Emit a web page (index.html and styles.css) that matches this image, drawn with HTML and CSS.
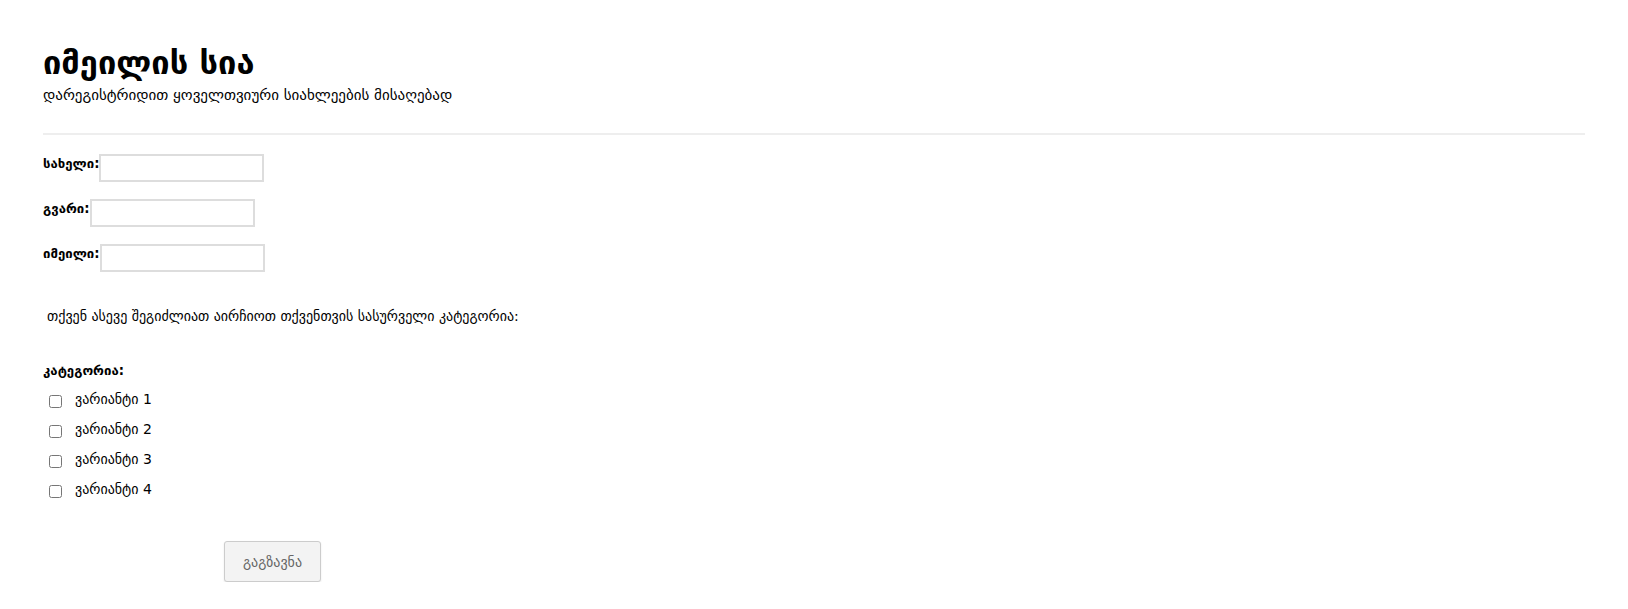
FILE: index.html
```html
<!doctype html>
<html lang="ka">
    <head>
        <meta charset="UTF-8" />
        <meta name="viewport" content="width=device-width, initial-scale=1.0" />
        <title>იმეილის სია</title>
        <link rel="stylesheet" href="styles.css">
    </head>
    <body>
        <div class="page">
            <h1>იმეილის სია</h1>
            <p class="subtitle">დარეგისტრიდით ყოველთვიური სიახლეების მისაღებად</p>
            <hr class="divider" />
            <form id="signupForm">
                <div class="field">
                    <label for="first_name">სახელი:</label><input type="text" id="first_name" name="first_name" />
                </div>
                <div class="field">
                    <label for="last_name">გვარი:</label><input type="text" id="last_name" name="last_name" />
                </div>
                <div class="field">
                    <label for="email">იმეილი:</label><input type="email" id="email" name="email" />
                </div>

                <p class="note">თქვენ ასევე შეგიძლიათ აირჩიოთ თქვენთვის სასურველი კატეგორია:</p>

                <div class="category">
                    <div class="category-title">კატეგორია:</div>
                    <label class="option"><input type="checkbox" name="cat" value="1" /> ვარიანტი 1</label>
                    <label class="option"><input type="checkbox" name="cat" value="2" /> ვარიანტი 2</label>
                    <label class="option"><input type="checkbox" name="cat" value="3" /> ვარიანტი 3</label>
                    <label class="option"><input type="checkbox" name="cat" value="4" /> ვარიანტი 4</label>
                </div>

                <div class="actions">
                    <button type="submit">გაგზავნა</button>
                </div>
            </form>
        </div>
    </body>
</html>
```
FILE: styles.css
```css
body {
    font-family: "DejaVu Sans", sans-serif;
    margin: 0;
    padding: 0;
    background-color: #fff;
    color: #000;
}
.page {
    padding: 43px 43px 0;
}
h1 {
    font-size: 32.6px;
    font-weight: bold;
    margin: 0;
    line-height: 40px;
}
.subtitle {
    font-size: 15px;
    margin: 2px 0 0;
    line-height: 20px;
}
.divider {
    border: none;
    height: 2px;
    background: #eee;
    margin: 28px 0 19px;
}
.field {
    display: flex;
    align-items: flex-start;
    margin-bottom: 17px;
}
.field label {
    font-size: 13.2px;
    font-weight: bold;
    line-height: 20px;
}
.field input {
    width: 157px;
    height: 22px;
    padding: 1px 2px;
    border: 2px solid #ddd;
    margin: 0;
    font-size: 14px;
}
.note {
    font-size: 14px;
    margin: 34px 0 0 4px;
    line-height: 20px;
}
.category {
    margin-top: 35px;
}
.category-title {
    font-size: 13.2px;
    font-weight: bold;
    line-height: 20px;
    margin-bottom: 3px;
}
.option {
    display: flex;
    align-items: center;
    font-size: 14px;
    line-height: 20px;
    height: 30px;
}
.option input {
    width: 13px;
    height: 13px;
    margin: 4px 13px 0 6px;
}
.actions {
    padding-left: 181px;
    margin-top: 37px;
}
button {
    width: 97px;
    height: 41px;
    font-family: "DejaVu Sans", sans-serif;
    font-size: 14px;
    color: #666;
    background: #f3f3f3;
    border: 1px solid #ccc;
    border-radius: 3px;
    box-shadow: 0 1px 2px rgba(0, 0, 0, 0.1);
}
```
